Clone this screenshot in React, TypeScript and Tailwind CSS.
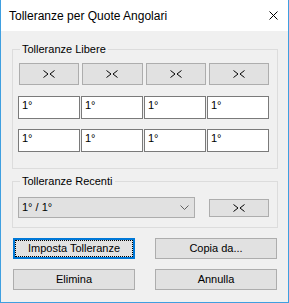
import React from 'react';

function Arrows() {
  return (
    <svg width="12" height="8" viewBox="0 0 12 8" fill="none" stroke="#000" strokeWidth="1">
      <polyline points="0.5,0.5 5,4 0.5,7.5" />
      <polyline points="11.5,0.5 7,4 11.5,7.5" />
    </svg>
  );
}

function ArrowButton() {
  return (
    <div className="h-[22px] bg-[#e1e1e1] border border-[#adadad] flex items-center justify-center">
      <Arrows />
    </div>
  );
}

function Field({ value }: { value: string }) {
  return (
    <div className="h-[23px] bg-white border border-[#7a7a7a] pl-[3px] pt-[2px] leading-[13px]">
      {value}
    </div>
  );
}

function DialogButton({ label, focused }: { label: string; focused?: boolean }) {
  return (
    <div
      className={
        focused
          ? 'w-[122px] h-[21px] bg-[#e1e1e1] border-2 border-[#0078d7] outline-1 outline-dotted outline-black -outline-offset-3 flex items-center justify-center'
          : 'w-[122px] h-[21px] bg-[#e1e1e1] border border-[#adadad] flex items-center justify-center'
      }
    >
      {label}
    </div>
  );
}

export default function App() {
  const cols = [0, 1, 2, 3];

  return (
    <div className="w-[289px] h-[303px] bg-[#f0f0f0] border-x border-b border-[#3f9fe0] flex flex-col text-black text-[11px] font-['Liberation_Sans',Arial,sans-serif]">
      {/* Title bar */}
      <div className="h-[31px] shrink-0 bg-white flex items-center justify-between pl-[8px]">
        <span className="text-[12px]">Tolleranze per Quote Angolari</span>
        <div className="w-[30px] h-full flex items-center justify-center">
          <svg width="9" height="9" viewBox="0 0 9 9" stroke="#000" strokeWidth="1">
            <line x1="0.5" y1="0.5" x2="8.5" y2="8.5" />
            <line x1="8.5" y1="0.5" x2="0.5" y2="8.5" />
          </svg>
        </div>
      </div>

      <div className="px-[11px]">
        {/* Tolleranze Libere */}
        <fieldset className="mt-[11px] w-[266px] border border-[#dcdcdc] pl-[5px] pb-[16px]">
          <legend className="ml-[2px] px-[2px] leading-[14px]">Tolleranze Libere</legend>
          <div className="mt-[7px] ml-[1px] w-[250px] grid grid-cols-4 gap-[3px]">
            {cols.map((i) => (
              <ArrowButton key={i} />
            ))}
          </div>
          <div className="mt-[11px] w-[251px] grid grid-cols-4 gap-[1px]">
            {cols.map((i) => (
              <Field key={i} value="1°" />
            ))}
          </div>
          <div className="mt-[10px] w-[251px] grid grid-cols-4 gap-[1px]">
            {cols.map((i) => (
              <Field key={i} value="1°" />
            ))}
          </div>
        </fieldset>

        {/* Tolleranze Recenti */}
        <fieldset className="mt-[5px] w-[266px] border border-[#dcdcdc] pl-[5px] pb-[9px]">
          <legend className="ml-[2px] px-[2px] leading-[14px]">Tolleranze Recenti</legend>
          <div className="mt-[9px] flex items-center">
            <div className="w-[177px] h-[21px] bg-[#e1e1e1] border border-[#adadad] flex items-center justify-between pl-[3px] pr-[5px]">
              <span>1° / 1°</span>
              <svg width="9" height="5" viewBox="0 0 9 5" fill="none" stroke="#606060" strokeWidth="1">
                <polyline points="0.5,0.5 4.5,4.5 8.5,0.5" />
              </svg>
            </div>
            <div className="ml-[14px] w-[60px] h-[18px] bg-[#e1e1e1] border border-[#adadad] flex items-center justify-center">
              <Arrows />
            </div>
          </div>
        </fieldset>

        {/* Actions */}
        <div className="mt-[10px] ml-[1px] w-[264px] flex flex-col gap-[10px]">
          <div className="flex justify-between">
            <DialogButton label="Imposta Tolleranze" focused />
            <DialogButton label="Copia da..." />
          </div>
          <div className="flex justify-between">
            <DialogButton label="Elimina" />
            <DialogButton label="Annulla" />
          </div>
        </div>
      </div>
    </div>
  );
}
